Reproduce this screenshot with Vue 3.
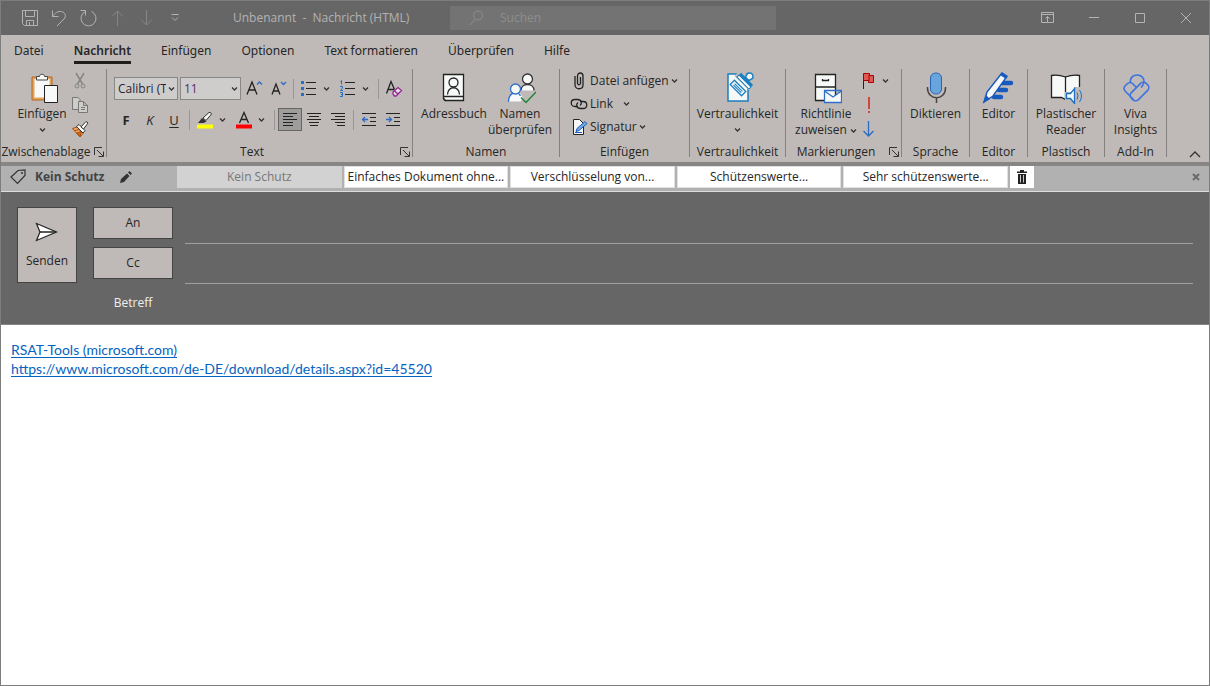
<script setup>
import { ref } from 'vue'

const tabs = ['Datei', 'Nachricht', 'Einfügen', 'Optionen', 'Text formatieren', 'Überprüfen', 'Hilfe']
const activeTab = ref('Nachricht')
const labels = ['Kein Schutz', 'Einfaches Dokument ohne...', 'Verschlüsselung von...', 'Schützenswerte...', 'Sehr schützenswerte...']
const alignment = ref('left')
const to = ref('')
const cc = ref('')
const subject = ref('')
const query = ref('')
</script>

<template>
  <div class="window">
    <header class="titlebar">
      <div class="quick">
        <button aria-label="Speichern"><svg width="18" height="18" viewBox="0 0 18 18"><path d="M1.500 1.500h15v15h-13l-2-2zM4.500 1.500v6h9v-6M5.500 16.500v-5h7v5M8.500 13v3.500" /></svg></button>
        <button aria-label="Rückgängig"><svg width="18" height="18" viewBox="0 0 18 18"><path d="M2.500 1.500v6h6M2.500 7.500C5 4 8 2 11.500 2.500c4 1 5 5 2.500 7.500l-7 7" /></svg></button>
        <button aria-label="Wiederholen"><svg width="18" height="18" viewBox="0 0 18 18"><path d="M1.500 1.500h5v5M6.500 2.500a7.500 7.500 0 1 0 6 0" /></svg></button>
        <button class="dim" aria-label="Vorheriges Element"><svg width="18" height="18" viewBox="0 0 18 18"><path d="M9.500 17V2M4 7.500l5.500-5.500L15 7.500" /></svg></button>
        <button class="dim" aria-label="Nächstes Element"><svg width="18" height="18" viewBox="0 0 18 18"><path d="M9.500 1v15M4 10.500l5.500 5.500 5.500-5.500" /></svg></button>
        <button aria-label="Symbolleiste anpassen"><svg width="18" height="18" viewBox="0 0 18 18"><path d="M5.500 5.500h7M6 8.500l3 3 3-3" /></svg></button>
      </div>
      <div class="caption">Unbenannt&nbsp; -&nbsp; Nachricht (HTML)</div>
      <label class="search">
        <svg width="16" height="18" viewBox="0 0 16 18"><circle cx="9" cy="6.500" r="4.500" /><path d="M6.500 10L1 16" /></svg>
        <input v-model="query" type="search" placeholder="Suchen" aria-label="Suchen" />
      </label>
      <div class="controls">
        <button aria-label="Menüband anzeigen"><svg width="14" height="12" viewBox="0 0 14 12"><path d="M.500.500h12v10H.500zM.500 2.500h12M6.500 10V4.500M4.500 6.500l2-2 2 2" /></svg></button>
        <button aria-label="Minimieren"><svg width="12" height="12" viewBox="0 0 12 12"><path d="M1 5.500h10" /></svg></button>
        <button aria-label="Maximieren"><svg width="12" height="12" viewBox="0 0 12 12"><path d="M1.500 1.500h9v9h-9z" /></svg></button>
        <button aria-label="Schließen"><svg width="12" height="12" viewBox="0 0 12 12"><path d="M1 1l10 10M11 1L1 11" /></svg></button>
      </div>
    </header>

    <nav class="tabs">
      <button v-for="tab in tabs" :key="tab" :class="{ active: tab === activeTab }" @click="activeTab = tab"><span>{{ tab }}</span></button>
    </nav>

    <div class="ribbon">
      <section class="group clipboard">
        <div class="tools">
          <button class="big">
            <svg width="32" height="32" viewBox="0 0 32 32">
              <path d="M6 5h20v23H6z" fill="#e3a45c" stroke="#b5651d" /><path d="M8.500 7h15v18.500h-15z" fill="#f7f9f9" />
              <path d="M10.500 8V4.500h3c0-3 5-3 5 0h3V8z" fill="#f7f9f9" stroke="#444" />
              <path d="M18.500 13.500h13v17h-13z" fill="#f7f9f9" stroke="#222" />
            </svg>
            <span>Einfügen</span>
            <svg class="chev" width="7" height="16" viewBox="0 0 7 16"><path d="M1 6.500L3.500 9 6 6.500" /></svg>
          </button>
          <div class="stack">
            <button aria-label="Ausschneiden"><svg width="18" height="18" viewBox="0 0 18 18" fill="none" stroke="#858585"><path d="M5 1l6.500 11M13 1L6.500 12" stroke-width="1.500" /><circle cx="6" cy="14" r="2" /><circle cx="12" cy="14" r="2" /></svg></button>
            <button aria-label="Kopieren"><svg width="18" height="18" viewBox="0 0 18 18" fill="#cfcdca" stroke="#777"><path d="M1.500 1.500H7l2 2v10H1.500z" /><path d="M7.500 5.500h5l4 4v7h-9zM12.500 5.500v4h4M10 11.500h4M10 13.500h4" /></svg></button>
            <button aria-label="Format übertragen"><svg width="18" height="18" viewBox="0 0 18 18"><path d="M1.500 8.500L6 7l6 6.500L9 17z" fill="#f2a765" stroke="#a9500d" /><path d="M3.500 10.500l6-1M5.500 13l5-1.500L9 16.500z" fill="#c8691c" stroke="#a9500d" /><path d="M5.500 6.500L8 4.500l6 6-2 2.500z" fill="#fff" stroke="#333" /><path d="M10 7l5-5.500 2 1.500-4.500 6z" fill="#fff" stroke="#333" /></svg></button>
          </div>
        </div>
        <footer><h2>Zwischenablage</h2><button class="launch" aria-label="Zwischenablage öffnen"><svg width="10" height="10" viewBox="0 0 10 10"><path d="M8 .500H.500V8M3 3l6 6M9.500 4.500v5h-5" /></svg></button></footer>
      </section>

      <section class="group text">
        <div class="tools rows">
          <div class="row">
            <span class="combo"><select aria-label="Schriftart"><option>Calibri (Textkörper)</option></select><svg class="chev" width="7" height="6" viewBox="0 0 7 6"><path d="M1 1.500L3.500 4 6 1.500" /></svg></span>
            <span class="combo"><select aria-label="Schriftgrad"><option>11</option></select><svg class="chev" width="7" height="6" viewBox="0 0 7 6"><path d="M1 1.500L3.500 4 6 1.500" /></svg></span>
            <button class="tool" aria-label="Schrift vergrößern"><svg width="18" height="18" viewBox="0 0 18 18" fill="none"><path d="M2 14.500L7 2l5 12.500M3.500 10h7" stroke="#222" stroke-width="1.300" /><path d="M12 4.500L14.500 2 17 4.500" stroke="#2b6cc4" stroke-width="1.300" /></svg></button>
            <button class="tool" aria-label="Schrift verkleinern"><svg width="18" height="18" viewBox="0 0 18 18" fill="none"><path d="M3 14.500L7 4l4 10.500M4.500 11h5" stroke="#222" stroke-width="1.300" /><path d="M12 2L14.500 4.500 17 2" stroke="#2b6cc4" stroke-width="1.300" /></svg></button>
            <i class="sep"></i>
            <button class="tool" aria-label="Aufzählungszeichen"><svg width="18" height="18" viewBox="0 0 18 18"><path d="M1 1h3v3H1zM1 7h3v3H1zM1 13h3v3H1z" fill="#2b6cc4" /><path d="M6 2.500h10M6 8.500h10M6 14.500h10" stroke="#222" /></svg></button>
            <button class="drop" aria-label="Aufzählungsoptionen"><svg class="chev" width="7" height="6" viewBox="0 0 7 6"><path d="M1 1.500L3.500 4 6 1.500" /></svg></button>
            <button class="tool" aria-label="Nummerierung"><svg width="18" height="18" viewBox="0 0 18 18" fill="none" stroke="#2b6cc4"><path d="M1.500 1.500l1-1v4M1 6.500h2.500V8L1.500 10.500H4M1 12.500h2.500v4H1M2 14.500h1.500" /><path d="M6 2.500h10M6 8.500h10M6 14.500h10" stroke="#222" /></svg></button>
            <button class="drop" aria-label="Nummerierungsoptionen"><svg class="chev" width="7" height="6" viewBox="0 0 7 6"><path d="M1 1.500L3.500 4 6 1.500" /></svg></button>
            <i class="sep"></i>
            <button class="tool" aria-label="Formatierung löschen"><svg width="18" height="18" viewBox="0 0 18 18" fill="none"><path d="M1.500 13.500L6 1.500l3.500 8M3 9.500h6" stroke="#222" stroke-width="1.300" /><path d="M8 12l5-4.500 3.500 3-5.500 5.500H9.500L8 14z" fill="#eadcec" stroke="#92278f" stroke-width="1.300" /><path d="M9.500 11l3.500 3" stroke="#92278f" stroke-width="1.500" /></svg></button>
          </div>
          <div class="row">
            <button class="tool bold">F</button>
            <button class="tool italic">K</button>
            <button class="tool under">U</button>
            <i class="sep"></i>
            <button class="tool" aria-label="Texthervorhebung"><svg width="18" height="18" viewBox="0 0 18 18"><path d="M7 7l6-5.500q2-.5 2.500 1.500L10 9.500z" fill="#f7f9f9" stroke="#333" /><path d="M6 7l4.500 3.500-3 1.500L2 12z" fill="#333" /><path d="M1 13.500h16v4H1z" fill="#ff0" /></svg></button>
            <button class="drop" aria-label="Hervorhebungsfarben"><svg class="chev" width="7" height="6" viewBox="0 0 7 6"><path d="M1 1.500L3.500 4 6 1.500" /></svg></button>
            <button class="tool" aria-label="Schriftfarbe"><svg width="18" height="18" viewBox="0 0 18 18"><path d="M4.500 12L9 1.500 13.500 12M6 8.500h6" fill="none" stroke="#222" stroke-width="1.300" /><path d="M1 13.500h16v4H1z" fill="#f00" /></svg></button>
            <button class="drop" aria-label="Schriftfarben"><svg class="chev" width="7" height="6" viewBox="0 0 7 6"><path d="M1 1.500L3.500 4 6 1.500" /></svg></button>
            <i class="sep"></i>
            <button class="tool" :class="{ pressed: alignment === 'left' }" aria-label="Linksbündig" @click="alignment = 'left'"><svg class="lines" width="16" height="15" viewBox="0 0 16 15"><path d="M1 1.500h14M1 4.500h10M1 7.500h14M1 10.500h10M1 13.500h10" /></svg></button>
            <button class="tool" :class="{ pressed: alignment === 'center' }" aria-label="Zentriert" @click="alignment = 'center'"><svg class="lines" width="16" height="15" viewBox="0 0 16 15"><path d="M1 1.500h14M3 4.500h10M1 7.500h14M3 10.500h10M4 13.500h8" /></svg></button>
            <button class="tool" :class="{ pressed: alignment === 'right' }" aria-label="Rechtsbündig" @click="alignment = 'right'"><svg class="lines" width="16" height="15" viewBox="0 0 16 15"><path d="M1 1.500h14M5 4.500h10M1 7.500h14M5 10.500h10M7 13.500h8" /></svg></button>
            <i class="sep"></i>
            <button class="tool" aria-label="Einzug verkleinern"><svg class="lines" width="16" height="15" viewBox="0 0 16 15"><path d="M1 1.500h14M9 5.500h6M9 9.500h6M1 13.500h14" /><path d="M7 7.500H1.500M4 5L1.500 7.500 4 10" stroke="#2b6cc4" stroke-width="1.300" /></svg></button>
            <button class="tool" aria-label="Einzug vergrößern"><svg class="lines" width="16" height="15" viewBox="0 0 16 15"><path d="M1 1.500h14M9 5.500h6M9 9.500h6M1 13.500h14" /><path d="M1 7.500h5.500M4 5l2.500 2.500L4 10" stroke="#2b6cc4" stroke-width="1.300" /></svg></button>
          </div>
        </div>
        <footer><h2>Text</h2><button class="launch" aria-label="Schriftoptionen"><svg width="10" height="10" viewBox="0 0 10 10"><path d="M8 .500H.500V8M3 3l6 6M9.500 4.500v5h-5" /></svg></button></footer>
      </section>

      <section class="group names">
        <div class="tools">
          <button class="big"><svg width="32" height="32" viewBox="0 0 32 32" fill="#f7f9f9" stroke="#222" stroke-width="1.300"><path d="M5.500 2.500h20v26h-18l-2-2zM5.500 24.500h20" /><path d="M5.500 25.500q0 3 2.500 3" /><circle cx="15.500" cy="10.500" r="4.500" /><path d="M9.500 22.500c0-9 12-9 12 0" /></svg><span>Adressbuch</span></button>
          <button class="big"><svg width="32" height="32" viewBox="0 0 32 32" fill="#f7f9f9" stroke-width="1.300"><g stroke="#333"><path d="M17 18.500c0-8 13-8 13 0" stroke-width="1.300" /><circle cx="23.500" cy="7" r="5" /></g><g stroke="#2f6fc9"><path d="M4.500 29.500v-2c0-9 14-9 14-1l-2 3z" stroke="none" /><path d="M4.500 30c0-11 10-11 12-6" /><circle cx="11.500" cy="17" r="5" /></g><path d="M17 25.500l5 5L32 20" fill="none" stroke="#23833b" stroke-width="1.500" /></svg><span>Namen<br />überprüfen</span></button>
        </div>
        <footer><h2>Namen</h2></footer>
      </section>

      <section class="group insert">
        <div class="tools commands">
          <button><svg width="18" height="18" viewBox="0 0 18 18" fill="none" stroke="#222" stroke-width="1.300"><path d="M10.500 5v6.500q-1.500 2.500-3 0V4c0-4 5.500-4 5.500 0v9c0 5-8 5-8 0V4" /></svg>Datei anfügen<svg class="chev" width="7" height="6" viewBox="0 0 7 6"><path d="M1 1.500L3.500 4 6 1.500" /></svg></button>
          <button><svg width="18" height="18" viewBox="0 0 18 18" fill="none" stroke="#222" stroke-width="1.300"><path d="M8 11.500H5c-5 0-5-7 0-7h2.500c4 0 5 4 2.500 6" /><path d="M10 6.500h3c5 0 5 7 0 7h-2.500c-4 0-5-4-2.500-6" /></svg>Link<svg class="chev apart" width="7" height="6" viewBox="0 0 7 6"><path d="M1 1.500L3.500 4 6 1.500" /></svg></button>
          <button><svg width="18" height="18" viewBox="0 0 18 18"><path d="M3.500 1.500h6l4 4v11h-10z" fill="#f7f9f9" stroke="#222" /><path d="M6 13.500l1-3 8-7 2 2-8 7z" fill="#75ace0" stroke="#185abd" /><path d="M5 14.500h7" stroke="#185abd" /></svg>Signatur<svg class="chev" width="7" height="6" viewBox="0 0 7 6"><path d="M1 1.500L3.500 4 6 1.500" /></svg></button>
        </div>
        <footer><h2>Einfügen</h2></footer>
      </section>

      <section class="group">
        <div class="tools">
          <button class="big"><svg width="32" height="32" viewBox="0 0 32 32"><path d="M6 2h20v27H6z" fill="#f7f9f9" stroke="#1b7fc0" stroke-width="1.500" /><g transform="translate(16 16) rotate(45)" fill="#f7f9f9" stroke="#1b7fc0"><path d="M-8-3H8v6H-8z" stroke-width="1.300" /><path d="M-5.500-.7h11M-5.500 1h11" stroke-width="1" /></g><g transform="translate(23 9) rotate(45)"><path d="M-11-6H11v10H-11z" fill="#bfbab7" /><path d="M-8.500 0h17v3h-17z" fill="#f7f9f9" stroke="#1b7fc0" /><path d="M-8.500-3h17v3h-17z" fill="#1b7fc0" /><path d="M-2.500-3l-1-4.500q3.500-5 7 0l-1 4.500z" fill="#f7f9f9" stroke="#1b7fc0" stroke-width="1.500" /></g></svg><span>Vertraulichkeit</span><svg class="chev" width="7" height="16" viewBox="0 0 7 16"><path d="M1 6.500L3.500 9 6 6.500" /></svg></button>
        </div>
        <footer><h2>Vertraulichkeit</h2></footer>
      </section>

      <section class="group marks">
        <div class="tools">
          <button class="big"><svg width="32" height="32" viewBox="0 0 32 32"><path d="M5.500 2.500h20v26h-20zM5.500 15h20" fill="#f7f9f9" stroke="#222" stroke-width="1.300" /><path d="M12.500 7v1.500h6V7" fill="none" stroke="#222" stroke-width="1.300" /><path d="M14.500 18.500h17v12h-17zM14.500 19l8.500 6 8.500-6" fill="#f7f9f9" stroke="#2f6fc9" stroke-width="1.300" /></svg><span>Richtlinie<br />zuweisen <svg class="chev" width="7" height="6" viewBox="0 0 7 6"><path d="M1 1.500L3.500 4 6 1.500" /></svg></span></button>
          <div class="stack">
            <button class="flag" aria-label="Zur Nachverfolgung"><svg width="18" height="18" viewBox="0 0 18 18"><path d="M3.500 2v15" stroke="#222" /><path d="M3.500 1.500h6v2h4v7h-5v-2h-5zM9 3v6" fill="#e05a55" stroke="#a80000" /></svg><svg class="chev" width="7" height="6" viewBox="0 0 7 6"><path d="M1 1.500L3.500 4 6 1.500" /></svg></button>
            <button aria-label="Wichtigkeit: hoch"><svg width="18" height="18" viewBox="0 0 18 18"><path d="M9 1v12M9 15v2" stroke="#d13c2c" stroke-width="1.800" /></svg></button>
            <button aria-label="Wichtigkeit: niedrig"><svg width="18" height="18" viewBox="0 0 18 18"><path d="M8.500 1v15M3.500 11l5 5 5-5" fill="none" stroke="#2b6cc4" stroke-width="1.300" /></svg></button>
          </div>
        </div>
        <footer><h2>Markierungen</h2><button class="launch" aria-label="Nachrichtenoptionen"><svg width="10" height="10" viewBox="0 0 10 10"><path d="M8 .500H.500V8M3 3l6 6M9.500 4.500v5h-5" /></svg></button></footer>
      </section>

      <section class="group">
        <div class="tools">
          <button class="big"><svg width="32" height="32" viewBox="0 0 32 32"><rect x="10.500" y="1" width="11" height="21" rx="5" fill="#68a5dc" stroke="#2f62b5" /><path d="M7.500 15v1c0 13 18 13 18 0v-1M16.500 25.500V31" fill="none" stroke="#444" stroke-width="1.500" /></svg><span>Diktieren</span></button>
        </div>
        <footer><h2>Sprache</h2></footer>
      </section>

      <section class="group">
        <div class="tools">
          <button class="big"><svg width="32" height="32" viewBox="0 0 32 32"><path d="M20 11h9M17 18h7M12 25h7" stroke="#185abd" stroke-width="4.500" stroke-linecap="round" /><path d="M2 30l3-10L19.500 1.500l5 3.500L11 24z" fill="#f7f9f9" stroke="#185abd" stroke-width="1.500" /><path d="M18 3l2-3 6 4-2 3zM1 31l3-8 4 4z" fill="#185abd" /></svg><span>Editor</span></button>
        </div>
        <footer><h2>Editor</h2></footer>
      </section>

      <section class="group">
        <div class="tools">
          <button class="big"><svg width="32" height="32" viewBox="0 0 32 32"><path d="M1.500 3.500q7-1 14 1.500 7-2.500 14-1.500v22h-10l-4 2-4-2h-10z" fill="#f7f9f9" stroke="#222" stroke-width="1.300" /><path d="M15.500 4.500v22" stroke="#222" stroke-width="1.300" /><path d="M15 20h7v12h-7zM24 15h8v16h-8z" fill="#bfbab7" /><path d="M16.500 21.500h4l4-5v15l-4-5h-4z" fill="#f7f9f9" stroke="#1b6fc0" stroke-width="1.300" /><path d="M27 20.500q2 3 0 7M29.500 18q4 6 0 12" fill="none" stroke="#1b6fc0" /></svg><span>Plastischer<br />Reader</span></button>
        </div>
        <footer><h2>Plastisch</h2></footer>
      </section>

      <section class="group">
        <div class="tools">
          <button class="big"><svg width="32" height="32" viewBox="0 0 32 32" fill="none" stroke="#3c73e0" stroke-width="1.600"><path d="M10.500 10.500C9 .500 25 .500 24 10.500q-1 3-3 5" /><path d="M17 16l-4-4q-3-3-6 0l-1.500 1.500q-3 3 0 6l8 8" /><rect x="-10.500" y="-5" width="21" height="10" rx="4" transform="translate(19.500 19.500) rotate(-45)" /></svg><span>Viva<br />Insights</span></button>
        </div>
        <footer><h2>Add-In</h2></footer>
      </section>

      <button class="collapse" aria-label="Menüband reduzieren"><svg width="12" height="7" viewBox="0 0 12 7"><path d="M1 6l5-5 5 5" /></svg></button>
    </div>

    <div class="protect">
      <div class="current">
        <svg width="18" height="18" viewBox="0 0 18 18"><path d="M2 9l7-6.500 7-.5v5.500L8.500 15.500z" fill="none" stroke="#333" stroke-width="1.200" /><circle cx="13" cy="5" r="1" fill="#333" /></svg>
        <strong>Kein Schutz</strong>
        <button aria-label="Bezeichnung bearbeiten"><svg width="12" height="12" viewBox="0 0 12 12"><path d="M0 12l1-4 6-5.500 2.500 2.500L4 11zM8 1.500L9.500 0 12 2.500 10.500 4z" fill="#333" /></svg></button>
      </div>
      <div class="choices"><button v-for="(label, i) in labels" :key="label" :disabled="i === 0">{{ label }}</button></div>
      <button class="trash" aria-label="Bezeichnung löschen"><svg width="12" height="14" viewBox="0 0 12 14"><path d="M1 1.500h10V3H1zM4 0h4v2H4zM2 4h8v10H2z" fill="#222" /><path d="M4.500 5v7.500M7.500 5v7.500" stroke="#ccc" /></svg></button>
      <button class="close" aria-label="Leiste schließen"><svg width="8" height="8" viewBox="0 0 8 8"><path d="M1 1l6 6M7 1L1 7" stroke="#6a6a6a" stroke-width="2" /></svg></button>
    </div>

    <form class="address" @submit.prevent>
      <button class="send" type="submit"><svg width="24" height="20" viewBox="0 0 24 20"><path d="M1.500 1.500l20 8.500-20 8.500L5 10z" fill="#fff" stroke="#222" stroke-width="1.200" /><path d="M5 10h16" stroke="#222" stroke-width="1.500" /></svg><span>Senden</span></button>
      <div class="fields">
        <button type="button" class="pick">An</button><input v-model="to" class="line" aria-label="An" />
        <button type="button" class="pick">Cc</button><input v-model="cc" class="line" aria-label="Cc" />
        <label for="subject">Betreff</label><input id="subject" v-model="subject" />
      </div>
    </form>

    <main class="message">
      <p><a href="https://www.microsoft.com/de-DE/download/details.aspx?id=45520">RSAT-Tools (microsoft.com)</a></p>
      <p><a href="https://www.microsoft.com/de-DE/download/details.aspx?id=45520">https://www.microsoft.com/de-DE/download/details.aspx?id=45520</a></p>
    </main>
  </div>
</template>

<style>
body { background: #fff; }
</style>

<style scoped>
.window { box-sizing: border-box; min-height: 100vh; display: flex; flex-direction: column; border: 1px solid #7d7d7d; font: 12px/16px "Open Sans", "Noto Sans", sans-serif; color: #262626; background: #fff; }
button, input, select { font: inherit; color: inherit; border: 0; padding: 0; margin: 0; background: none; border-radius: 0; }
svg { display: block; flex: none; }

.titlebar { display: flex; align-items: center; height: 34px; background: #666; color: #b3b3b3; }
.titlebar svg { fill: none; stroke: #b3b3b3; }
.quick { display: flex; width: 232px; padding-left: 14px; box-sizing: border-box; }
.quick button { width: 29px; display: grid; place-items: center; }
.quick .dim svg { stroke: #858585; }
.caption { width: 217px; white-space: nowrap; }
.search { display: flex; align-items: center; flex: 0 1 326px; min-width: 0; height: 24px; box-sizing: border-box; padding-left: 19px; gap: 15px; background: #737373; }
.search svg { stroke: #8e8e8e; }
.search input { flex: 1; min-width: 0; outline: 0; }
.search input::placeholder { color: #8e8e8e; opacity: 1; }
.controls { display: flex; margin-left: auto; }
.controls button { width: 46px; height: 32px; display: grid; place-items: center; }

.tabs { display: flex; height: 31px; background: #bfbab7; font-family: "Noto Sans", sans-serif; padding-left: 13px; gap: 30px; }
.tabs button { white-space: nowrap; display: flex; align-items: center; }
.tabs span { border-bottom: 3px solid transparent; border-top: 3px solid transparent; line-height: 20px; }
.tabs .active span { border-bottom-color: #1f1e1d; font-weight: 600; }

.ribbon { display: grid; grid-template-columns: 106px 306px 147px 130px 96px 116px 68px 58px 77px 62px 1fr; height: 96px; background: #bfbab7; white-space: nowrap; }
.ribbon { border-bottom: 4px solid #878685; }
.group { display: flex; flex-direction: column; justify-content: space-between; border-right: 1px solid #85817f; height: 88px; margin-top: 3px; }
.tools { display: flex; justify-content: center; padding-top: 3px; }
.big { display: flex; flex-direction: column; align-items: center; justify-content: flex-start; }
.big > span { margin-top: 2px; }
.chev { fill: none; stroke: #333; stroke-width: 1.3; display: inline-block; }
.group footer { display: flex; height: 10px; align-items: center; }
h2 { flex: 1; margin: 0; font: inherit; text-align: center; }
.launch { width: 15px; display: grid; place-items: center; }
.launch svg { fill: none; stroke: #333; }
.stack { display: flex; flex-direction: column; gap: 6px; }
.stack button { height: 18px; display: flex; align-items: center; }
.clipboard .tools { justify-content: flex-start; padding-left: 12px; }
.clipboard .big { width: 58px; }

.tools.rows { flex-direction: column; gap: 8px; padding: 8px 0 0 7px; justify-content: flex-start; }
.row { display: flex; align-items: center; height: 23px; }
.tool { width: 24px; height: 23px; box-sizing: border-box; display: grid; place-items: center; }
.drop { width: 11px; margin-right: 4px; display: grid; place-items: center; }
.sep { width: 1px; height: 20px; margin: 0 3px; background: #999593; }
.combo { position: relative; margin-right: 1px; width: 61px; height: 23px; }
.combo:first-child { width: 64px; margin-right: 2px; }
.combo select { appearance: none; width: 100%; height: 23px; box-sizing: border-box; border: 1px solid #888; background: #cfcdcb; padding: 0 11px 0 3px; overflow: hidden; color: #2a2433; }
.combo .chev { position: absolute; right: 3px; top: 9px; }
.combo + .combo select { color: #5a2a6e; }
.bold, .italic, .under { font-size: 13px; }
.bold { font-weight: 700; }
.italic { font-style: italic; }
.under { text-decoration: underline; text-underline-offset: 2px; }
.pressed { background: #9f9d9b; border: 1px solid #666; }
.lines { fill: none; stroke: #222; }

.names .tools { justify-content: flex-start; padding-left: 8px; }
.names .big { width: 66px; }
.commands { flex-direction: column; justify-content: flex-start; padding: 0 0 0 10px; }
.commands button { height: 23px; display: flex; align-items: center; gap: 2px; }
.commands .apart { margin-left: 8px; }
.marks .tools { justify-content: flex-start; padding-left: 6px; }
.marks .big { width: 68px; }
.marks .big .chev { vertical-align: middle; }
.flag { gap: 4px; }
.collapse { align-self: end; justify-self: end; padding: 4px 8px; }
.collapse svg { fill: none; stroke: #333; stroke-width: 1.3; }

.protect { display: flex; align-items: flex-start; height: 25px; background: #b1b1b1; border-bottom: 1px solid #ddd; }
.current { display: flex; align-items: center; width: 175px; height: 22px; padding-left: 1px; box-sizing: border-box; color: #444; }
.current svg:first-child { margin: 0 8px 0 7px; }
.current button { margin-left: 9px; }
.current strong { font-weight: 700; }
.choices { display: grid; grid-template-columns: repeat(5, 1fr); flex: 0 1 831px; gap: 2px; margin-left: 1px; }
.choices button { height: 22px; background: #fff; white-space: nowrap; border: 1px solid #e0e0e0; }
.choices button:disabled { background: #d2d2d2; color: #777; border-color: #d2d2d2; }
.trash { width: 24px; height: 22px; background: #fff; display: grid; place-items: center; margin-left: 2px; }
.close { margin-left: auto; width: 27px; height: 22px; display: grid; place-items: center; }

.address { display: flex; align-items: flex-start; height: 133px; box-sizing: border-box; padding: 15px 16px 0; gap: 16px; background: #666; border-bottom: 1px solid #858585; }
.send { width: 60px; height: 76px; border: 1px solid #444; background: #bfbab7; display: flex; flex-direction: column; align-items: center; justify-content: center; gap: 11px; }
.fields { flex: 1; display: grid; grid-template-columns: 80px 1fr; column-gap: 12px; row-gap: 8px; }
.pick { height: 32px; border: 1px solid #444; background: #bfbab7; }
.fields input { color: #fff; outline: 0; min-width: 0; }
.fields .line { border-bottom: 1px solid #a0a0a0; height: 37px; margin-bottom: -5px; box-sizing: border-box; }
.fields label { color: #f0f0f0; text-align: center; line-height: 32px; }

.message { flex: 1; padding: 15px 10px; background: #fff; font: 14px/19px Lato, sans-serif; }
.message p { margin: 0; }
.message a { color: #0563c1; text-underline-offset: 2px; }
</style>
